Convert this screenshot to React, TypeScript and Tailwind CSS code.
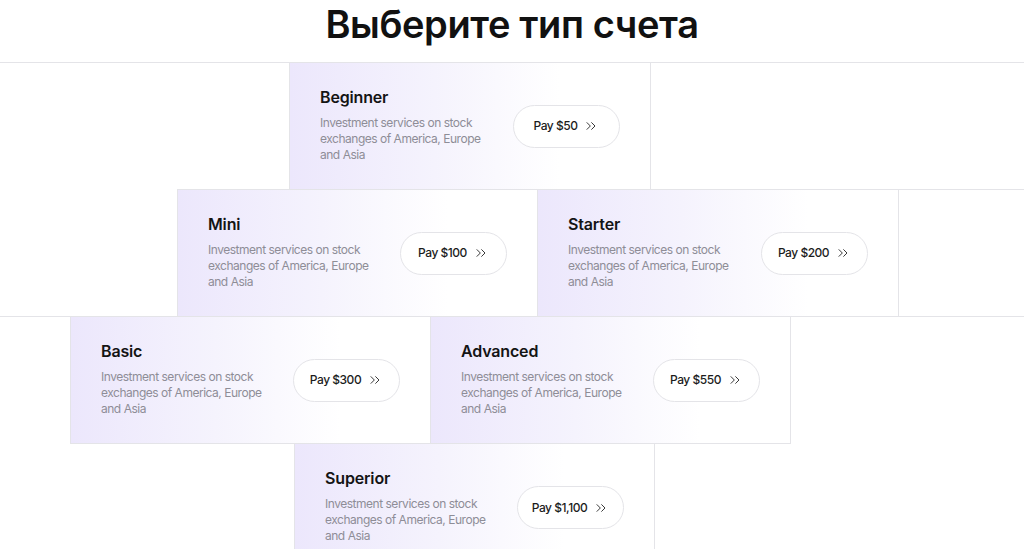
import { ChevronsRight } from "lucide-react";

const DESCRIPTION = "Investment services on stock exchanges of America, Europe and Asia";

type Plan = { name: string; price: string };

function PlanCard({ plan, className }: { plan: Plan; className: string }) {
  return (
    <div
      className={`flex h-full shrink-0 items-center justify-between border-[#e4e4e8] bg-linear-to-r from-[#ece7fc] via-[#f5f3fd] via-40% to-white to-75% pr-[30px] pl-[30px] ${className}`}
    >
      <div className="w-[170px] pb-[3px]">
        <h3 className="text-[16px] leading-[20px] font-semibold tracking-[-0.01em] text-[#141414]">
          {plan.name}
        </h3>
        <p className="mt-[8px] text-[12px] leading-[16px] tracking-[-0.04em] text-[#8e8d97]">
          {DESCRIPTION}
        </p>
      </div>
      <button className="flex h-[43px] w-[107px] items-center justify-center gap-[6px] rounded-full border border-[#e4e4e8] bg-white text-[12px] font-medium tracking-[-0.04em] text-[#1c1c1c]">
        Pay {plan.price}
        <ChevronsRight size={16} strokeWidth={1.4} className="text-[#2a2a2a]" />
      </button>
    </div>
  );
}

export default function App() {
  return (
    <div
      className="h-[549px] w-full overflow-hidden bg-white"
      style={{ fontFamily: "Inter, 'Noto Sans', sans-serif" }}
    >
      <h1 className="mb-[14px] text-center text-[38px] leading-[48px] font-semibold tracking-[-0.01em] text-[#111]">
        Выберите тип счета
      </h1>

      {/* row 1 */}
      <div className="flex h-[127px] border-t border-[#e4e4e8]">
        <div className="w-[289px] shrink-0" />
        <PlanCard plan={{ name: "Beginner", price: "$50" }} className="w-[362px] border-x" />
        <div className="flex-1" />
      </div>

      {/* row 2 */}
      <div className="flex h-[128px] border-b border-[#e4e4e8]">
        <div className="w-[177px] shrink-0" />
        <PlanCard plan={{ name: "Mini", price: "$100" }} className="w-[360px] border-t border-l" />
        <PlanCard plan={{ name: "Starter", price: "$200" }} className="w-[361px] border-t border-l" />
        <div className="flex-1 border-t border-l border-[#e4e4e8]" />
      </div>

      {/* row 3 */}
      <div className="flex h-[127px]">
        <div className="w-[70px] shrink-0" />
        <PlanCard plan={{ name: "Basic", price: "$300" }} className="w-[360px] border-b border-l" />
        <PlanCard plan={{ name: "Advanced", price: "$550" }} className="w-[361px] border-x border-b" />
      </div>

      {/* row 4 */}
      <div className="flex h-[127px]">
        <div className="w-[294px] shrink-0" />
        <PlanCard plan={{ name: "Superior", price: "$1,100" }} className="w-[361px] border-x" />
      </div>
    </div>
  );
}
